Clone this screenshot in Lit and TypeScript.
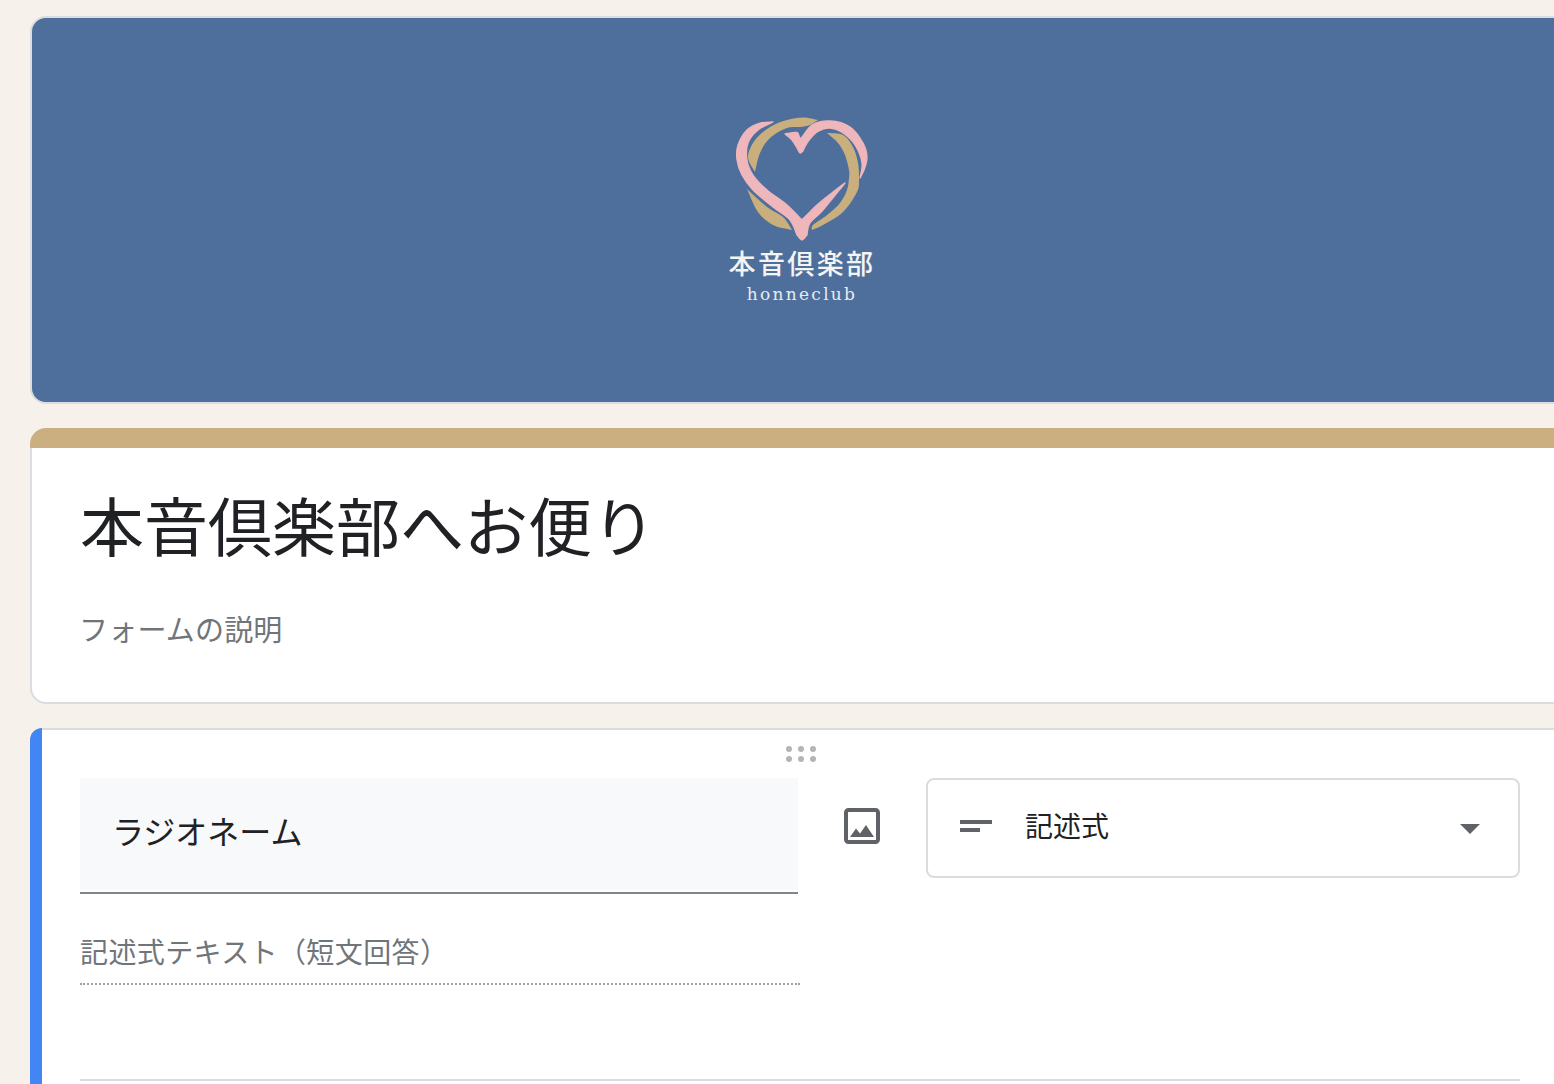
import { LitElement, html, css, svg } from "lit";
import { customElement } from "lit/decorators.js";

type Pt = [number, number];

/* Smooth outline through traced points; each edge is its own curve, so tips stay sharp. */
function shape(...edges: Pt[][]): string {
  let d = "";
  edges.forEach((p, ei) => {
    d += ei === 0 ? `M${p[0][0]} ${p[0][1]}` : `L${p[0][0]} ${p[0][1]}`;
    for (let i = 0; i < p.length - 1; i++) {
      const a = p[Math.max(i - 1, 0)];
      const b = p[i];
      const c = p[i + 1];
      const e = p[Math.min(i + 2, p.length - 1)];
      const c1x = b[0] + (c[0] - a[0]) / 6;
      const c1y = b[1] + (c[1] - a[1]) / 6;
      const c2x = c[0] - (e[0] - b[0]) / 6;
      const c2y = c[1] - (e[1] - b[1]) / 6;
      d += `C${c1x.toFixed(1)} ${c1y.toFixed(1)} ${c2x.toFixed(1)} ${c2y.toFixed(1)} ${c[0]} ${c[1]}`;
    }
  });
  return d + "Z";
}

const GOLD = [
  shape(
    [[755, 172], [748, 157], [755, 140], [770, 127], [787, 120], [803, 117.5], [818, 120]],
    [[818, 120], [810, 125], [800, 127], [787, 128], [770, 138], [760, 153], [755, 172]]
  ),
  shape(
    [[827, 133], [843, 135], [853, 147], [858, 163], [859, 180], [857, 192], [843, 212], [823, 225], [812, 230]],
    [[812, 230], [813, 225], [827, 215], [840, 203], [847, 190], [849, 178], [849, 170], [845, 155], [838, 143], [827, 133]]
  ),
  shape(
    [[747, 189], [767, 207], [783, 217], [792, 230]],
    [[792, 230], [773, 225], [758, 212], [747, 189]]
  ),
];

const PINK = [
  shape(
    [[773, 122], [760, 123], [747, 130], [738, 145], [737, 160], [742, 175], [753, 190], [773, 207], [790, 220], [797, 235]],
    [[797, 235], [802, 240], [807, 235]],
    [[807, 235], [810, 223], [823, 210], [845, 183]],
    [[845, 183], [833, 192], [817, 205], [802, 220]],
    [[802, 220], [787, 205], [767, 190], [753, 175], [747, 160], [748, 143], [758, 130], [773, 122]]
  ),
  shape(
    [[785, 134], [797, 132.5], [801, 138], [812, 125], [830, 121], [850, 127], [863, 143], [867, 157], [864, 170], [860, 178]],
    [[860, 178], [862, 163], [855, 145], [843, 133], [830, 128], [817, 132], [807, 143], [803, 151]],
    [[803, 151], [800, 153], [797, 148], [792, 140], [785, 134]]
  ),
];

@customElement("app-root")
export class AppRoot extends LitElement {
  static styles = css`
    :host {
      display: block;
      height: 1084px;
      overflow: hidden;
      background: #f6f1eb;
      font-family: "Noto Sans CJK JP", "Liberation Sans", sans-serif;
      color: #202124;
    }
    .page {
      width: 1544px;
      margin-left: 30px;
      padding-top: 16px;
      display: flex;
      flex-direction: column;
    }
    .banner {
      height: 388px;
      box-sizing: border-box;
      background: #4e6f9c;
      border: 2px solid #dadce0;
      border-radius: 16px;
      display: flex;
      flex-direction: column;
      align-items: center;
      padding-top: 92px;
    }
    .heart { width: 150px; height: 140px; display: block; flex: none; }
    .pink { fill: #efb6bb; stroke: #efb6bb; stroke-width: 1.3; stroke-linejoin: round; }
    .gold { fill: #c9ae7e; }
    .logo-jp {
      color: #f4f4f2;
      font-size: 27px;
      line-height: 36px;
      letter-spacing: 2.4px;
      margin-top: -5px;
      font-weight: 500;
      white-space: nowrap;
    }
    .logo-en {
      color: #e6ebf0;
      font-family: "DejaVu Serif", "Liberation Serif", serif;
      font-size: 17px;
      line-height: 24px;
      letter-spacing: 2.3px;
      margin-top: 1px;
      white-space: nowrap;
    }
    .title-card {
      margin-top: 24px;
      height: 276px;
      display: flex;
      flex-direction: column;
    }
    .title-band {
      height: 20px;
      flex: none;
      background: #cbaf80;
      border-radius: 16px 16px 0 0;
    }
    .title-body {
      flex: 1;
      box-sizing: border-box;
      background: #fff;
      border: 2px solid #dadce0;
      border-top: none;
      border-radius: 0 0 16px 16px;
      padding: 28px 0 0 48px;
    }
    .title {
      font-size: 64px;
      line-height: 94px;
      white-space: nowrap;
    }
    .desc {
      margin-top: 38px;
      font-size: 29px;
      line-height: 40px;
      letter-spacing: 0.2px;
      margin-left: -1px;
      color: #70757a;
      white-space: nowrap;
    }
    .q-card {
      margin-top: 24px;
      height: 420px;
      background: #4285f4;
      border-radius: 12px 0 0 0;
      padding-left: 12px;
    }
    .q-body {
      height: 100%;
      box-sizing: border-box;
      background: #fff;
      border-top: 2px solid #dadce0;
      padding-left: 38px;
    }
    .handle {
      height: 48px;
      width: 1440px;
      display: flex;
      justify-content: center;
      align-items: center;
      padding-left: 2px;
      box-sizing: border-box;
    }
    .dots {
      display: grid;
      grid-template-columns: repeat(3, 6px);
      gap: 4px 6px;
    }
    .dots i {
      width: 6px;
      height: 6px;
      border-radius: 50%;
      background: #b5b5b5;
    }
    .row { display: flex; align-items: flex-start; width: 1440px; }
    .q-input {
      width: 718px;
      height: 116px;
      box-sizing: border-box;
      background: linear-gradient(#f8f9fa, #f8f9fa) no-repeat top / 100% 112px;
      border-bottom: 2px solid #80868b;
      padding: 30px 0 0 32px;
      font-size: 32px;
      line-height: 44px;
      white-space: nowrap;
    }
    .img-icon { width: 36px; height: 36px; margin: 30px 46px 0; display: block; flex: none; }
    .select {
      width: 594px;
      height: 100px;
      box-sizing: border-box;
      border: 2px solid #dadce0;
      border-radius: 8px;
      display: flex;
      align-items: center;
      padding: 0 38px 0 32px;
      font-size: 28px;
    }
    .lines { width: 32px; height: 12px; display: block; flex: none; margin-top: -4px; }
    .select span { margin-left: 33px; flex: 1; line-height: 40px; margin-top: -6px; }
    .arrow { width: 20px; height: 10px; display: block; flex: none; margin-top: 2px; }
    .short {
      margin-top: 37px;
      width: 720px;
      height: 54px;
      box-sizing: border-box;
      font-size: 28px;
      line-height: 40px;
      letter-spacing: 0.4px;
      color: #70757a;
      border-bottom: 2px dotted #9aa0a6;
      white-space: nowrap;
    }
    .sep {
      margin-top: 94px;
      width: 1440px;
      height: 2px;
      background: #dadce0;
    }
  `;

  render() {
    return html`
      <div class="page">
        <div class="banner">
          <svg class="heart" viewBox="727 110 150 140" aria-hidden="true">
            ${GOLD.map((d) => svg`<path class="gold" d=${d}/>`)}
            ${PINK.map((d) => svg`<path class="pink" d=${d}/>`)}
          </svg>
          <div class="logo-jp">本音倶楽部</div>
          <div class="logo-en">honneclub</div>
        </div>

        <div class="title-card">
          <div class="title-band"></div>
          <div class="title-body">
            <div class="title">本音倶楽部へお便り</div>
            <div class="desc">フォームの説明</div>
          </div>
        </div>

        <div class="q-card">
          <div class="q-body">
            <div class="handle">
              <div class="dots"><i></i><i></i><i></i><i></i><i></i><i></i></div>
            </div>
            <div class="row">
              <div class="q-input">ラジオネーム</div>
              <svg class="img-icon" viewBox="0 0 36 36" aria-hidden="true">
                <rect x="2" y="2" width="32" height="32" rx="2.5" fill="none" stroke="#5f6368" stroke-width="4"/>
                <path d="M6 29L12 20.5L16 25.5L22 17L30 29Z" fill="#5f6368"/>
              </svg>
              <div class="select">
                <svg class="lines" viewBox="0 0 32 12" aria-hidden="true">
                  <rect x="0" y="0" width="32" height="4" fill="#5f6368"/>
                  <rect x="0" y="8" width="20" height="4" fill="#5f6368"/>
                </svg>
                <span>記述式</span>
                <svg class="arrow" viewBox="0 0 20 10" aria-hidden="true"><path d="M0 0H20L10 10Z" fill="#5f6368"/></svg>
              </div>
            </div>
            <div class="short">記述式テキスト（短文回答）</div>
            <div class="sep"></div>
          </div>
        </div>
      </div>
    `;
  }
}
